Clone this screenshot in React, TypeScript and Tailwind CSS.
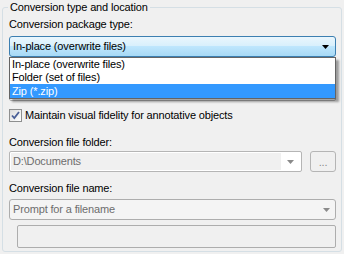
import React from "react";

const font = { fontFamily: '"Liberation Sans", Arial, sans-serif', letterSpacing: "-0.15px" };

function Arrow({ color }: { color: string }) {
  return (
    <svg width="7" height="4" viewBox="0 0 7 4">
      <path d="M0 0H7L3.5 4Z" fill={color} />
    </svg>
  );
}

export default function App() {
  return (
    <div className="w-[344px] h-[254px] bg-[#f0f0f0] text-[11px] leading-[15px] text-black overflow-hidden" style={font}>
      <div className="pt-[7px] px-[2px]">
        <div className="relative h-[245px] w-[340px] border border-[#d5dfe5] rounded-[3px] pl-[6px] pr-[5px]">
          <div className="absolute left-[5px] top-[-8px] px-[2px] bg-[#f0f0f0]">Conversion type and location</div>

          <div className="pt-[9px]">Conversion package type:</div>

          <div className="relative mt-[4px]">
            <div className="h-[21px] w-[327px] rounded-[3px] border border-[#3c7fb1] bg-[linear-gradient(#eaf6fd,#d9f0fc_45%,#bee6fd_50%,#a7d9f5)] flex items-center pl-[3px] pr-[6px]">
              <span className="flex-1">In-place (overwrite files)</span>
              <Arrow color="#000" />
            </div>
            <div className="mt-[22px] h-[22px] w-[327px] rounded-[2px] border border-[#b5b5b5] bg-white" />
            <div className="absolute left-0 top-[21px] w-[327px] border border-[#646464] bg-white shadow-[3px_3px_2px_rgba(0,0,0,0.35)]">
              <div className="h-[13px] leading-[13px] pl-[2px]">In-place (overwrite files)</div>
              <div className="h-[13px] leading-[13px] pl-[2px]">Folder (set of files)</div>
              <div className="h-[14px] leading-[14px] pl-[2px] bg-[#3399ff] text-white">Zip (*.zip)</div>
            </div>
          </div>

          <div className="mt-[7px] flex items-center gap-[3px]">
            <div className="w-[13px] h-[13px] border border-[#8e8f8f] bg-[linear-gradient(135deg,#dcdcdc,#fff)] flex items-center justify-center">
              <svg width="9" height="9" viewBox="0 0 9 9">
                <path d="M1 4.5L3.3 7L8 1" stroke="#4a5f97" strokeWidth="1.8" fill="none" />
              </svg>
            </div>
            <span>Maintain visual fidelity for annotative objects</span>
          </div>

          <div className="mt-[12px]">Conversion file folder:</div>

          <div className="mt-[1px] flex items-center">
            <div className="h-[21px] w-[293px] rounded-[2px] border border-[#b5b5b5] bg-white p-[1px] flex">
              <div className="flex-1 bg-[#f0f0f0] text-[#6d6d6d] pl-[2px] leading-[17px]">D:\Documents</div>
              <div className="w-[19px] flex items-center justify-center">
                <Arrow color="#8a8a8a" />
              </div>
            </div>
            <div className="ml-[8px] h-[21px] w-[26px] rounded-[3px] border border-[#b5b5b5] bg-[#f0f0f0] text-[#8a8a8a] flex items-center justify-center leading-[12px]">...</div>
          </div>

          <div className="mt-[9px]">Conversion file name:</div>

          <div className="mt-[3px] h-[21px] w-[327px] rounded-[3px] border border-[#adadad] bg-[#f4f4f4] text-[#6d6d6d] flex items-center pl-[3px] pr-[5px]">
            <span className="flex-1">Prompt for a filename</span>
            <Arrow color="#8a8a8a" />
          </div>

          <div className="mt-[5px] ml-[8px] h-[23px] w-[319px] rounded-[2px] border border-[#adadad] bg-[#f0f0f0]" />
        </div>
      </div>
    </div>
  );
}
